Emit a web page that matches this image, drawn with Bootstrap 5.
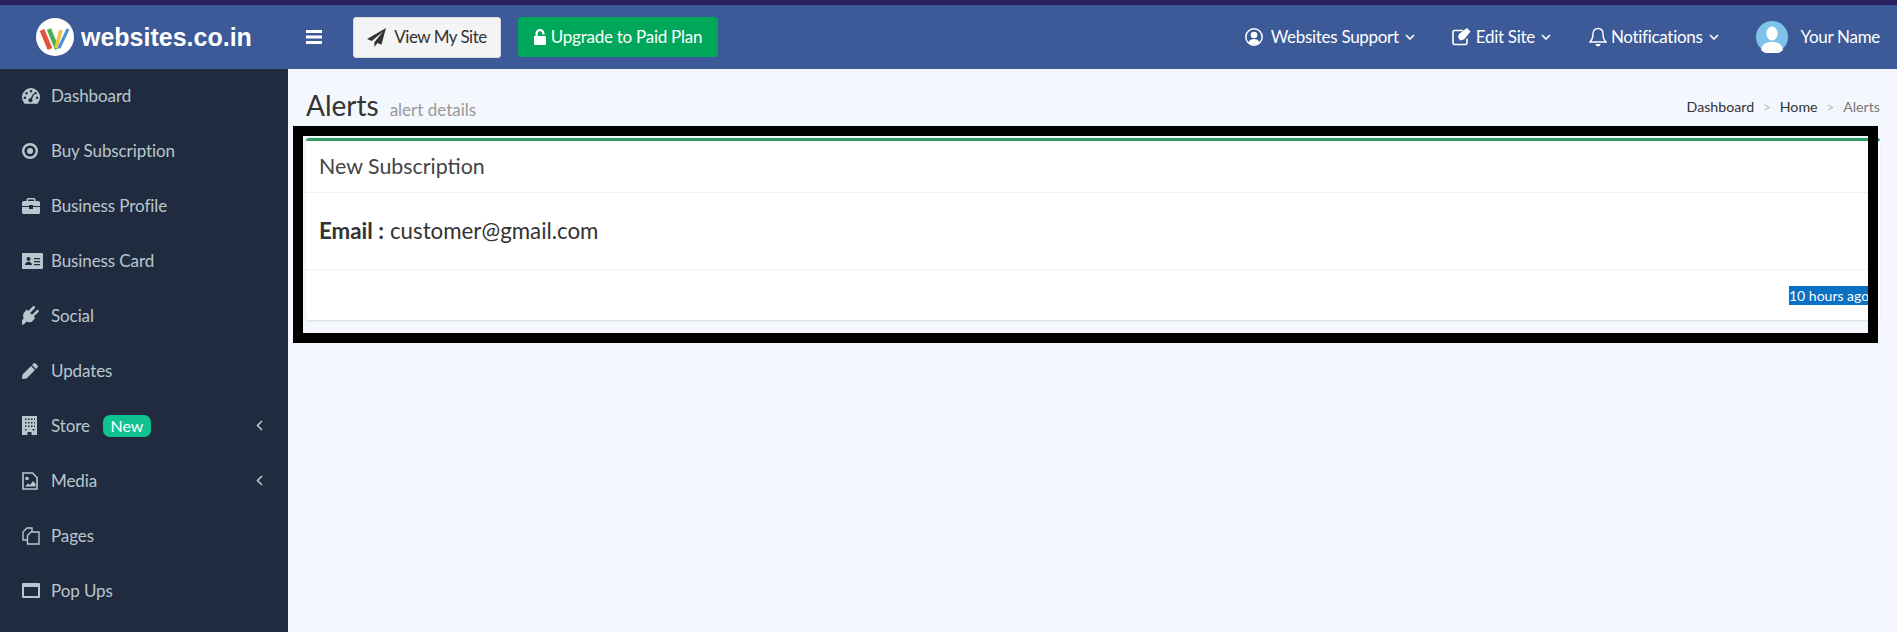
<!DOCTYPE html>
<html lang="en">
<head>
<meta charset="utf-8">
<title>Alerts</title>
<link href="https://cdn.jsdelivr.net/npm/bootstrap@5.3.0/dist/css/bootstrap.min.css" rel="stylesheet">
<style>
html,body{height:100%;}
body{font-family:Lato,"Noto Sans",sans-serif;background:#f4f7fd;overflow:hidden;display:flex;flex-direction:column;color:#333;}
.top-strip{height:5px;background:#2a1e5c;flex:none;}
.head-bar{height:64px;background:#3d5a98;flex:none;padding:0 17px 0 36px;flex-wrap:nowrap;}
.brand-box{width:270px;color:#fff;font:700 25px "Liberation Sans",sans-serif;gap:7px;flex:none;}
.brand-disc{width:38px;height:38px;flex:none;}
.burger{width:16px;height:14px;margin-right:31px;flex:none;}
.btn-site{width:148px;height:41px;background:#f4f4f4;border:1px solid #ddd;color:#333;font-size:17px;letter-spacing:-.5px;padding:0;border-radius:3px;gap:8px;}
.btn-plan{width:200px;height:40px;margin-left:17px;background:#00a65a;border:0;color:#fff;font-size:17px;letter-spacing:-.25px;padding:0;border-radius:3px;gap:5px;}
.top-link{color:#fff;font-size:17px;letter-spacing:-.3px;text-decoration:none;display:flex;align-items:center;}
.top-link svg{flex:none;}
.chev{margin-left:6px;}
.gap-edit{margin-left:37px;}
.gap-bell{margin-left:38px;}
.ava{width:32px;height:32px;margin:0 13px 0 37px;}
.body-row{flex:1;min-height:0;}
.side-nav{width:288px;background:#212b3f;flex:none;}
.side-link{height:55px;color:#b8c7ce;font-size:17px;letter-spacing:-.1px;padding:0 25px 2px 22px;text-decoration:none;display:flex;align-items:center;}
.side-ico{width:29px;flex:none;display:flex;align-items:center;}
.tag-new{background:#0fc28f;color:#fff;font-size:16px;font-weight:400;padding:0;width:48px;height:22px;line-height:22px;border-radius:7px;margin-left:13px;}
.page-main{flex:1;min-width:0;padding:0 17px 0 18px;}
.title-row{height:69px;padding-top:18px;}
.page-h{font-size:28px;font-weight:400;color:#333;margin:0;line-height:36px;}
.page-sub{font-size:17px;color:#999;margin-left:11px;}
.crumbs{font-size:14.2px;margin:9px 0 0;--bs-breadcrumb-divider:'>';--bs-breadcrumb-item-padding-x:8.7px;--bs-breadcrumb-divider-color:#bbb;}
.crumbs a{color:#333;text-decoration:none;}
.crumbs .active{color:#777;}
.note-wrap{position:relative;}
.note-frame{position:absolute;left:-13px;top:-12px;width:1585px;height:217px;border:10px solid #000;pointer-events:none;}
.note-card{height:182px;border:0;border-top:3px solid #2f9c64;border-radius:3px;box-shadow:0 1px 2px rgba(0,0,0,.12);}
.note-head{height:52px;flex:none;background:#fff;border-bottom:1px solid #f0f0f0;font-size:21.400px;padding:0 13px;display:flex;align-items:center;color:#444;}
.note-body{height:76px;flex:none;padding:0 13px;font-size:22.300px;display:flex;align-items:center;color:#333;}
.note-body b{margin-right:6px;}
.note-foot{height:51px;flex:none;background:#fff;border-top:1px solid #f0f0f0;padding:0;position:relative;}
.stamp{position:absolute;left:1483px;top:16px;width:79px;height:19px;background:#0a70c3;color:#fff;font-size:14px;line-height:19px;white-space:nowrap;}
</style>
</head>
<body>
<div class="top-strip"></div>
<nav class="navbar head-bar d-flex align-items-center">
  <div class="brand-box d-flex align-items-center">
    <svg class="brand-disc" viewBox="0 0 38 38"><circle cx="19" cy="19" r="19" fill="#fff"/><path d="M6 12l8 19" stroke="#e2533f" stroke-width="5" fill="none"/><path d="M13 11l8 20" stroke="#4caf50" stroke-width="4.500" fill="none"/><path d="M20 30l5-18" stroke="#f2c33d" stroke-width="3.500" fill="none"/><path d="M23 30l9-19" stroke="#4a90d9" stroke-width="3" fill="none"/></svg>
    <span>websites.co.in</span>
  </div>
  <svg class="burger" viewBox="0 0 16 14"><path d="M0 0h16v3H0zM0 5.500h16v3H0zM0 11h16v3H0z" fill="#fff"/></svg>
  <a class="btn btn-site d-inline-flex align-items-center justify-content-center" href="#"><svg width="19" height="19" viewBox="0 0 18 18"><path d="M18 0L0 10.500l4.500 1.900L15 3.500 7 13.500V18l3-3.800 3.700 1.600z" fill="#333"/></svg>View My Site</a>
  <a class="btn btn-plan d-inline-flex align-items-center justify-content-center" href="#"><svg width="12" height="16" viewBox="0 0 12 16"><path d="M1.500 7V4.500a4.500 4.500 0 0 1 9 0V5.500H8.300v-1a2.300 2.300 0 0 0-4.600 0V7H11a1 1 0 0 1 1 1v7a1 1 0 0 1-1 1H1a1 1 0 0 1-1-1V8a1 1 0 0 1 1-1z" fill="#fff"/></svg>Upgrade to Paid Plan</a>
  <div class="ms-auto d-flex align-items-center">
    <a class="top-link" href="#"><svg width="18" height="18" viewBox="0 0 18 18" class="me-2"><circle cx="9" cy="9" r="8.200" fill="none" stroke="#fff" stroke-width="1.500"/><circle cx="9" cy="7" r="3.300" fill="#fff"/><path d="M3.500 14.500c1-3 3-3.500 5.500-3.500s4.500.5 5.500 3.500A8 8 0 0 1 3.500 14.500z" fill="#fff"/></svg>Websites Support<svg class="chev" width="10" height="6" viewBox="0 0 10 6"><path d="M1 1l4 4 4-4" fill="none" stroke="#fff" stroke-width="1.600"/></svg></a>
    <a class="top-link gap-edit" href="#"><svg width="20" height="18" viewBox="0 0 20 18" class="me-1"><path d="M15 10.500V15a1.500 1.500 0 0 1-1.500 1.500H2.500A1.500 1.500 0 0 1 1 15V4a1.500 1.500 0 0 1 1.500-1.500H11" fill="none" stroke="#fff" stroke-width="1.600"/><path d="M6 9l1-3 8-6 3.500 3.500-6.500 8-4 1z" fill="#fff"/></svg>Edit Site<svg class="chev" width="10" height="6" viewBox="0 0 10 6"><path d="M1 1l4 4 4-4" fill="none" stroke="#fff" stroke-width="1.600"/></svg></a>
    <a class="top-link gap-bell" href="#"><svg width="18" height="20" viewBox="0 0 18 20" class="me-1"><path d="M9 1.500c3 0 5 2.200 5 5.500 0 4 1 6 3 8H1c2-2 3-4 3-8 0-3.300 2-5.500 5-5.500z" fill="none" stroke="#fff" stroke-width="1.400"/><path d="M6.500 17h5a2.500 2.500 0 0 1-5 0z" fill="#fff"/></svg>Notifications<svg class="chev" width="10" height="6" viewBox="0 0 10 6"><path d="M1 1l4 4 4-4" fill="none" stroke="#fff" stroke-width="1.600"/></svg></a>
    <svg class="ava" viewBox="0 0 32 32"><circle cx="16" cy="16" r="16" fill="#7fc4e8"/><ellipse cx="16" cy="12.500" rx="5.500" ry="7" fill="#fff"/><path d="M5 29c1-6 5-8 11-8s10 2 11 8a16 16 0 0 1-22 0z" fill="#fff"/></svg>
    <span class="top-link">Your Name</span>
  </div>
</nav>
<div class="body-row d-flex">
  <aside class="side-nav">
    <nav class="nav flex-column">
      <a class="side-link" href="#"><span class="side-ico"><svg width="18" height="16" viewBox="0 0 18 16"><path fill-rule="evenodd" d="M9 0a9 9 0 0 1 9 9c0 2.400-.8 4.500-2.200 6.200-.3.400-.7.600-1.200.6H3.400c-.5 0-.9-.2-1.200-.6A9.400 9.400 0 0 1 0 9a9 9 0 0 1 9-9zM9 2a1.300 1.300 0 1 0 0 2.600A1.300 1.300 0 0 0 9 2zM4.500 3.900a1.300 1.300 0 1 0 0 2.600 1.300 1.300 0 0 0 0-2.600zM13.500 3.900a1.300 1.300 0 1 0 0 2.600 1.300 1.300 0 0 0 0-2.600zM2.900 8.500a1.300 1.300 0 1 0 0 2.600 1.300 1.300 0 0 0 0-2.600zM15.100 8.500a1.300 1.300 0 1 0 0 2.600 1.300 1.300 0 0 0 0-2.600zM11.300 5.500L8.500 10.200a2 2 0 1 0 1.500.8l2.300-5z" fill="#b8c7ce"/></svg></span>Dashboard</a>
      <a class="side-link" href="#"><span class="side-ico"><svg width="16" height="16" viewBox="0 0 16 16"><circle cx="8" cy="8" r="6.800" fill="none" stroke="#b8c7ce" stroke-width="2.400"/><circle cx="8" cy="8" r="3" fill="#b8c7ce"/></svg></span>Buy Subscription</a>
      <a class="side-link" href="#"><span class="side-ico"><svg width="18" height="16" viewBox="0 0 18 16"><path fill-rule="evenodd" d="M6 0h6a1.500 1.500 0 0 1 1.500 1.500V3h3A1.500 1.500 0 0 1 18 4.500V8H11V7H7v1H0V4.500A1.500 1.500 0 0 1 1.500 3h3V1.500A1.500 1.500 0 0 1 6 0zM6 1.500V3h6V1.500zM0 9h7v2h4V9h7v5.500a1.500 1.500 0 0 1-1.500 1.500h-15A1.500 1.500 0 0 1 0 14.500z" fill="#b8c7ce"/></svg></span>Business Profile</a>
      <a class="side-link" href="#"><span class="side-ico"><svg width="21" height="16" viewBox="0 0 21 16"><path fill-rule="evenodd" d="M1 0h19a1 1 0 0 1 1 1v14a1 1 0 0 1-1 1H1a1 1 0 0 1-1-1V1a1 1 0 0 1 1-1zM6.500 4a2 2 0 1 0 0 4 2 2 0 0 0 0-4zM3 12h7c0-2-1.500-3.300-3.500-3.300S3 10 3 12zM12 5v1.300h6V5zM12 8v1.300h6V8zM12 11v1.300h6V11z" fill="#b8c7ce"/></svg></span>Business Card</a>
      <a class="side-link" href="#"><span class="side-ico"><svg width="19" height="19" viewBox="0 0 19 19"><path d="M0 19l2.500-1.200L4.500 15.600c2.300 1.200 4.700.7 6.300-.9l2.400-2.600-1.500-1.500 4.600-4.400c.7-.7.700-1.500.2-2s-1.300-.5-2 .2l-4.500 4.400-1.900-1.900 4.400-4.500c.7-.7.700-1.500.2-2s-1.300-.5-2 .2L6.300 5.100 4.700 3.600 2.600 6c-1.600 1.700-2 4.100-.9 6.200L0 14.500z" fill="#b8c7ce"/></svg></span>Social</a>
      <a class="side-link" href="#"><span class="side-ico"><svg width="16" height="16" viewBox="0 0 16 16"><path d="M11.500.5a1.500 1.500 0 0 1 2 0l2 2a1.500 1.500 0 0 1 0 2L14 6 10 2zM9 3l4 4-8.500 8.500L0 16l.5-4.500z" fill="#b8c7ce"/></svg></span>Updates</a>
      <a class="side-link" href="#"><span class="side-ico"><svg width="15" height="19" viewBox="0 0 15 19"><path fill-rule="evenodd" d="M0 0h15v19H9.500v-3h-4v3H0zM3 2.500v1.500h1.500V2.500zM6 2.500v1.500h1.500V2.500zM9 2.500v1.500h1.500V2.500zM12 2.500v1.500h1V2.500zM3 6v1.500h1.500V6zM6 6v1.500h1.500V6zM9 6v1.500h1.500V6zM12 6v1.500h1V6zM3 9.500V11h1.500V9.500zM6 9.500V11h1.500V9.500zM9 9.500V11h1.500V9.500zM12 9.500V11h1V9.500zM3 13v1.500h1.500V13zM10.500 13v1.500h2V13z" fill="#b8c7ce"/></svg></span>Store<span class="badge tag-new">New</span><svg class="ms-auto" width="7" height="11" viewBox="0 0 7 11"><path d="M6 1L1.500 5.500 6 10" fill="none" stroke="#b8c7ce" stroke-width="1.600"/></svg></a>
      <a class="side-link" href="#"><span class="side-ico"><svg width="16" height="18" viewBox="0 0 16 18"><path d="M1 1h9.500L15 5.500V17H1z" fill="none" stroke="#b8c7ce" stroke-width="1.600"/><circle cx="5" cy="6.500" r="1.800" fill="#b8c7ce"/><path d="M3 14.500l3-3 2 1.500 3-4 2.500 3v2.500z" fill="#b8c7ce"/></svg></span>Media<svg class="ms-auto" width="7" height="11" viewBox="0 0 7 11"><path d="M6 1L1.500 5.500 6 10" fill="none" stroke="#b8c7ce" stroke-width="1.600"/></svg></a>
      <a class="side-link" href="#"><span class="side-ico"><svg width="18" height="18" viewBox="0 0 18 18"><path d="M6 13H1V5l4-4h5v4M10 5H9L5.500 8.500V17H17V5z" fill="none" stroke="#b8c7ce" stroke-width="1.400"/></svg></span>Pages</a>
      <a class="side-link" href="#"><span class="side-ico"><svg width="18" height="15" viewBox="0 0 18 15"><path fill-rule="evenodd" d="M1 0h16a1 1 0 0 1 1 1v13a1 1 0 0 1-1 1H1a1 1 0 0 1-1-1V1a1 1 0 0 1 1-1zM2 4v9h14V4z" fill="#b8c7ce"/></svg></span>Pop Ups</a>
    </nav>
  </aside>
  <main class="page-main">
    <div class="title-row d-flex justify-content-between align-items-start">
      <h1 class="page-h">Alerts<small class="page-sub">alert details</small></h1>
      <ol class="breadcrumb crumbs">
        <li class="breadcrumb-item"><a href="#">Dashboard</a></li>
        <li class="breadcrumb-item"><a href="#">Home</a></li>
        <li class="breadcrumb-item active">Alerts</li>
      </ol>
    </div>
    <div class="note-wrap">
      <div class="card note-card">
        <div class="card-header note-head">New Subscription</div>
        <div class="card-body note-body"><b>Email :</b> customer@gmail.com</div>
        <div class="card-footer note-foot"><span class="stamp">10 hours ago</span></div>
      </div>
      <div class="note-frame"></div>
    </div>
  </main>
</div>
<script src="https://cdn.jsdelivr.net/npm/bootstrap@5.3.0/dist/js/bootstrap.bundle.min.js"></script>
</body>
</html>
